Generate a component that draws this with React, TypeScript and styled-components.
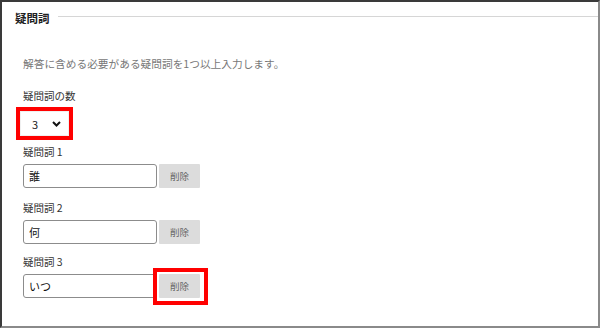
import styled, { createGlobalStyle } from "styled-components";

const GlobalStyle = createGlobalStyle`
  html, body {
    margin: 0;
    padding: 0;
    background: #ffffff;
  }
  * {
    box-sizing: border-box;
  }
`;

const SFrame = styled.div`
  width: 600px;
  height: 328px;
  border-top: 2px solid #3a3a3a;
  border-left: 2px solid #3a3a3a;
  border-right: 2px solid #8a8a8a;
  border-bottom: 2px solid #8a8a8a;
  background: #fff;
  font-family: "Noto Sans CJK JP", "Noto Sans", sans-serif;
  overflow: hidden;
`;

const SHeader = styled.div`
  display: flex;
  align-items: center;
  gap: 8px;
  padding: 8px 0 0 13px;
`;

const STitle = styled.span`
  font-size: 11.5px;
  line-height: 16px;
  font-weight: 700;
  color: #222;
`;

const SRule = styled.div`
  flex: 1;
  height: 1px;
  background: #d6d6d6;
  margin-top: -3px;
`;

const SBody = styled.div`
  display: flex;
  flex-direction: column;
  align-items: flex-start;
  padding: 0 0 0 21px;
`;

const SDescription = styled.p`
  margin: 31px 0 0;
  font-size: 10.7px;
  line-height: 14px;
  color: #777;
`;

const SLabel = styled.label<{ $top: number }>`
  display: block;
  margin-top: ${({ $top }) => $top}px;
  font-size: 10.5px;
  line-height: 14px;
  color: #333;
`;

const SHighlight = styled.div<{ $margin: string; $padding: string }>`
  display: inline-flex;
  border: 4px solid #ff0000;
  padding: ${({ $padding }) => $padding};
  margin: ${({ $margin }) => $margin};
`;

const SSelect = styled.div`
  width: 49px;
  height: 25px;
  display: flex;
  align-items: center;
  justify-content: space-between;
  padding: 0 7px 0 11px;
  background: #fff;
  border: 1px solid #f0f0f0;
  font-size: 11px;
  color: #222;
`;

const SRow = styled.div`
  display: flex;
  align-items: flex-start;
  margin-top: 5px;
`;

const SInput = styled.div`
  width: 134px;
  height: 24px;
  display: flex;
  align-items: center;
  padding-left: 5px;
  border: 1px solid #8c8c8c;
  border-radius: 3px;
  font-size: 11px;
  color: #111;
  background: #fff;
`;

const SButton = styled.button<{ $gap: number }>`
  width: 41px;
  height: 24px;
  margin-left: ${({ $gap }) => $gap}px;
  border: none;
  border-radius: 1px;
  background: #dcdcdc;
  color: #666;
  font-family: inherit;
  font-size: 9.5px;
  padding: 0;
`;

const Chevron = () => (
  <svg width="9" height="6" viewBox="0 0 9 6">
    <path d="M1 1 L4.5 4.5 L8 1" fill="none" stroke="#111" strokeWidth="2" />
  </svg>
);

const words = ["誰", "何", "いつ"];
const labelGaps = [5, 13, 11];

const App = () => {
  return (
    <>
      <GlobalStyle />
      <SFrame>
        <SHeader>
          <STitle>疑問詞</STitle>
          <SRule />
        </SHeader>
        <SBody>
          <SDescription>解答に含める必要がある疑問詞を1つ以上入力します。</SDescription>
          <SLabel $top={18}>疑問詞の数</SLabel>
          <SHighlight $margin="4px 0 0 -7px" $padding="0">
            <SSelect>
              <span>3</span>
              <Chevron />
            </SSelect>
          </SHighlight>
          {words.map((w, i) => (
            <div key={w}>
              <SLabel $top={labelGaps[i]}>疑問詞 {i + 1}</SLabel>
              <SRow>
                <SInput>{w}</SInput>
                {i === 2 ? (
                  <SHighlight $margin="-6px -8px -7px -4px" $padding="2px 4px 3px 2px">
                    <SButton $gap={0}>削除</SButton>
                  </SHighlight>
                ) : (
                  <SButton $gap={2}>削除</SButton>
                )}
              </SRow>
            </div>
          ))}
        </SBody>
      </SFrame>
    </>
  );
};

export default App;
